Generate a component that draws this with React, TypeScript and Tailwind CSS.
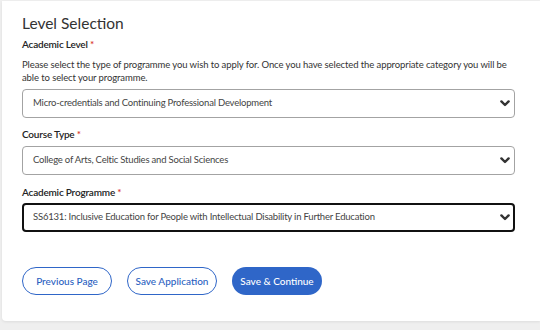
import React from "react";

const Chevron = () => (
  <svg width="10" height="7" viewBox="0 0 10 7" className="shrink-0">
    <path d="M1.4 1.4 L5 5 L8.6 1.4" fill="none" stroke="#333" strokeWidth="2.4" strokeLinecap="round" strokeLinejoin="round" />
  </svg>
);

const Select = ({ text, focused = false }: { text: string; focused?: boolean }) => (
  <div
    className={
      "h-[29px] w-[493px] flex items-center justify-between rounded-[4px] bg-white text-[9.5px] text-[#444] tracking-[-0.2px] " +
      (focused ? "border-2 border-[#111] pl-[9px] pr-[3px]" : "border border-[#a3a3a3] pl-[10px] pr-[4px]")
    }
  >
    <span>{text}</span>
    <Chevron />
  </div>
);

const Label = ({ text, className = "" }: { text: string; className?: string }) => (
  <div className={"h-[14px] leading-[14px] text-[10px] font-semibold text-[#222] tracking-[-0.2px] " + className}>
    {text} <span className="text-[#d9342b]">*</span>
  </div>
);

export default function App() {
  return (
    <div
      className="min-h-[330px] w-full bg-[#efefef] pl-[2px] pt-[1px]"
      style={{ fontFamily: "Lato, 'Open Sans', sans-serif" }}
    >
      <div className="bg-white rounded-bl-[4px] shadow-[0_1px_3px_rgba(0,0,0,0.08)] pl-[20px] pt-[12px] pb-[26px]">
        <h1 className="h-[20px] leading-[20px] text-[15.5px] text-[#333] font-normal">Level Selection</h1>
        <Label text="Academic Level" className="mt-[4px]" />
        <p className="mt-[7px] text-[9.5px] leading-[13px] text-[#333] w-[496px] tracking-[-0.1px]">
          Please select the type of programme you wish to apply for. Once you have selected the appropriate category you will be able to select your programme.
        </p>
        <div className="mt-[5px]">
          <Select text="Micro-credentials and Continuing Professional Development" />
        </div>
        <Label text="Course Type" className="mt-[9px]" />
        <div className="mt-[5px]">
          <Select text="College of Arts, Celtic Studies and Social Sciences" />
        </div>
        <Label text="Academic Programme" className="mt-[10px]" />
        <div className="mt-[4px]">
          <Select focused text="SS6131: Inclusive Education for People with Intellectual Disability in Further Education" />
        </div>
        <div className="mt-[35px] flex gap-[15px]">
          <button className="h-[28px] w-[90px] rounded-full border border-[#2f66c8] text-[#2b5fbf] text-[10px] font-medium bg-white">
            Previous Page
          </button>
          <button className="h-[28px] w-[90px] rounded-full border border-[#2f66c8] text-[#2b5fbf] text-[10px] font-medium bg-white">
            Save Application
          </button>
          <button className="h-[28px] w-[90px] rounded-full bg-[#2f66c8] text-white text-[10px] font-medium">
            Save &amp; Continue
          </button>
        </div>
      </div>
    </div>
  );
}
